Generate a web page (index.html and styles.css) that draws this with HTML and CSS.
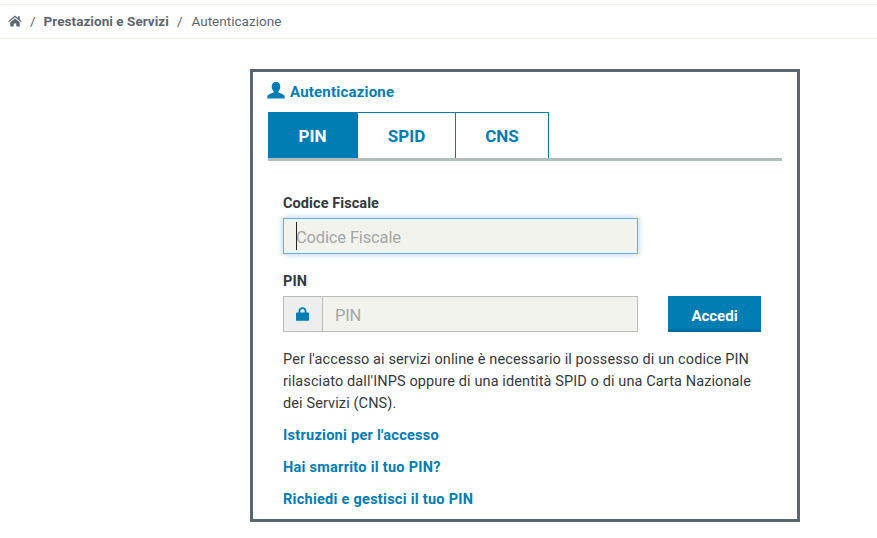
FILE: index.html
```html
<!DOCTYPE html>
<html lang="it">
<head>
<meta charset="utf-8">
<title>Autenticazione</title>
<link rel="stylesheet" href="styles.css">
</head>
<body>
<nav class="crumbs">
  <svg class="home" viewBox="0 0 14 12" aria-hidden="true"><path d="M7 0.6 L9.9 3 V1.3 H11.7 V4.5 L13.8 6.3 L13 7.1 L7 2.2 L1 7.1 L0.2 6.3 Z M2.3 7.3 L7 3.4 L11.7 7.3 V11.6 H8.3 V8.4 H5.7 V11.6 H2.3 Z"/></svg>
  <span class="sep">/</span>
  <a class="crumb-link">Prestazioni e Servizi</a>
  <span class="sep">/</span>
  <span class="crumb-current">Autenticazione</span>
</nav>
<main class="box">
  <h1 class="title">
    <svg class="user" viewBox="0 0 18 17" aria-hidden="true"><path d="M9 0 C11.8 0 13.3 2 13.3 4.6 C13.3 6.6 12.5 8.3 11.4 9.3 V10.6 C13.5 11.6 17.3 12.3 17.6 14.4 V16.6 H0.4 V14.4 C0.7 12.3 4.5 11.6 6.6 10.6 V9.3 C5.5 8.3 4.7 6.6 4.7 4.6 C4.7 2 6.2 0 9 0 Z"/></svg>
    <span>Autenticazione</span>
  </h1>
  <div class="tabs">
    <a class="tab tab-active tab-pin">PIN</a>
    <a class="tab tab-spid">SPID</a>
    <a class="tab tab-cns">CNS</a>
  </div>
  <form class="form">
    <label class="label">Codice Fiscale</label>
    <div class="input input-focus"><i class="caret"></i><span class="placeholder">Codice Fiscale</span></div>
    <label class="label label-pin">PIN</label>
    <div class="pin-row">
      <div class="input-group">
        <span class="addon">
          <svg class="lock" viewBox="0 0 12 13" aria-hidden="true"><path d="M2.3 5.2 V3.8 C2.3 1.6 3.9 0.2 6 0.2 C8.1 0.2 9.7 1.6 9.7 3.8 V5.2 H11.2 C11.7 5.2 12 5.5 12 6 V12 C12 12.5 11.7 12.8 11.2 12.8 H0.8 C0.3 12.8 0 12.5 0 12 V6 C0 5.5 0.3 5.2 0.8 5.2 Z M4 5.2 H8 V3.8 C8 2.6 7.1 1.9 6 1.9 C4.9 1.9 4 2.6 4 3.8 Z"/></svg>
        </span>
        <div class="input input-pin"><span class="placeholder">PIN</span></div>
      </div>
      <button class="submit" type="button">Accedi</button>
    </div>
    <p class="note">Per l'accesso ai servizi online è necessario il possesso di un codice PIN<br>rilasciato dall'INPS oppure di una identità SPID o di una Carta Nazionale<br>dei Servizi (CNS).</p>
    <a class="link">Istruzioni per l'accesso</a>
    <a class="link">Hai smarrito il tuo PIN?</a>
    <a class="link">Richiedi e gestisci il tuo PIN</a>
  </form>
</main>
</body>
</html>
```
FILE: styles.css
```css
* { box-sizing: border-box; }
html, body { margin: 0; padding: 0; background: #fff; }
body {
  width: 877px;
  height: 538px;
  overflow: hidden;
  font-family: Roboto, "Liberation Sans", sans-serif;
  color: #333a40;
  padding-top: 4px;
}
.crumbs {
  width: 877px;
  height: 35px;
  border-top: 1px solid #edece5;
  border-bottom: 1px solid #edece5;
  display: flex;
  align-items: center;
  padding: 0 0 2px 8px;
  font-size: 13.5px;
  color: #5b6670;
}
.home { width: 14px; height: 12px; fill: #5b6670; margin-right: 8px; }
.sep { margin-right: 8px; }
.crumb-link { font-weight: 700; margin-right: 8px; letter-spacing: .05px; }
.crumb-current { margin-left: 1px; letter-spacing: .02px; }
.box {
  width: 550px;
  height: 453px;
  margin: 30px 0 0 250px;
  border: 3px solid #5b6670;
  padding: 9px 15px 0;
}
.title {
  margin: 0;
  height: 31px;
  display: flex;
  align-items: center;
  gap: 5px;
  font-size: 15px;
  font-weight: 700;
  letter-spacing: .2px;
  color: #007db3;
  padding-bottom: 10px;
}
.user { width: 18px; height: 17px; fill: #007db3; margin: -3px 0 0 -1px; }
.tabs {
  display: flex;
  border-bottom: 3px solid #b1bcbd;
  height: 49px;
}
.tab {
  display: flex;
  align-items: center;
  justify-content: center;
  font-size: 17px;
  font-weight: 700;
  color: #007db3;
  border: 1px solid #007db3;
  border-left: 0;
  border-bottom: 0;
}
.tab-active { background: #007db3; color: #fff; }
.tab-pin { width: 90px; }
.tab-spid { width: 98px; }
.tab-cns { width: 93px; }
.form { padding: 34px 0 0 15px; }
.label { display: block; font-size: 14.5px; font-weight: 700; line-height: 18px; letter-spacing: .08px; color: #333a40; }
.label-pin { margin-top: 19px; }
.input {
  display: flex;
  align-items: center;
  height: 36px;
  padding-top: 2px;
  background: #f3f3ee;
  border: 1px solid #b7bcbc;
  font-size: 16.5px;
  letter-spacing: -.15px;
  color: #a3a6a6;
  position: relative;
}
.input-focus {
  width: 355px;
  margin-top: 5px;
  padding-left: 12px;
  border-color: #66afe9;
  box-shadow: 0 0 6px rgba(102, 175, 233, .6);
}
.caret { position: absolute; left: 12px; top: 3px; width: 1px; height: 28px; background: #222; }
.pin-row { display: flex; align-items: center; margin-top: 5px; }
.input-group { display: flex; width: 355px; }
.addon {
  width: 39px;
  height: 36px;
  display: flex;
  align-items: center;
  justify-content: center;
  background: #eeeeee;
  border: 1px solid #b7bcbc;
  border-right: 0;
}
.lock { width: 13px; height: 14px; fill: #007db3; margin-right: 1px; }
.input-pin { flex: 1; padding-left: 12px; }
.submit {
  width: 93px;
  height: 36px;
  margin-left: 30px;
  border: 0;
  border-bottom: 3px solid #006c9f;
  background: #007db3;
  color: #fff;
  font: 700 15px Roboto, "Liberation Sans", sans-serif;
  padding: 7px 0 0;
}
.note { margin: 17px 0 0; font-size: 14.5px; line-height: 22px; letter-spacing: .11px; color: #333a40; }
.link {
  display: block;
  font-size: 14.5px;
  font-weight: 700;
  line-height: 18px;
  letter-spacing: .27px;
  color: #007db3;
  margin-top: 14px;
}
.note + .link { margin-top: 12px; }
```
